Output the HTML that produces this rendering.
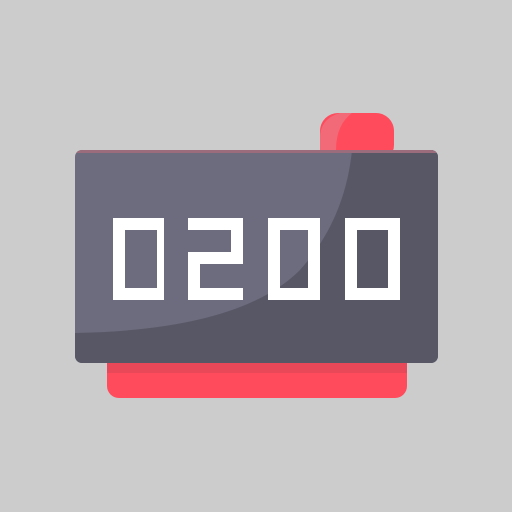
<html><body style="margin:0;width:512px;height:512px;background:#cccccc;overflow:hidden">
<svg width="512" height="512" viewBox="0 0 512 512">
<defs><clipPath id="b"><rect x="75" y="150" width="363" height="213" rx="7"/></clipPath></defs>
<rect x="320" y="113" width="74" height="50" rx="18" fill="#ff4b5c"/>
<path d="M320 150 L320 135 Q322 118 340 113 L352 113 Q336 125 336 150Z" fill="#f26a77"/>
<rect x="107" y="345" width="300" height="53" rx="12" fill="#ff4b5c"/>
<rect x="107" y="345" width="300" height="28" fill="#e84858"/>
<g clip-path="url(#b)">
<rect x="75" y="150" width="363" height="213" fill="#6c6c7e"/>
<path d="M352 150 Q345 220 300 270 Q240 330 75 333 L75 363 L438 363 L438 150Z" fill="#575766"/>
<rect x="75" y="150" width="363" height="3" fill="#9a6c7c"/>
</g>
<g fill="#ffffff">
<path fill-rule="evenodd" d="M113 218h51v82h-51zM125 230h32v58h-32z"/>
<path d="M188 218h55v12h-55zM231 218h12v46h-12zM188 252h55v12h-55zM188 252h12v48h-12zM188 288h55v12h-55z"/>
<path fill-rule="evenodd" d="M268 218h52v82h-52zM280 230h28v58h-28z"/>
<path fill-rule="evenodd" d="M345 218h55v82h-55zM357 230h31v58h-31z"/>
</g>
</svg>
</body></html>
